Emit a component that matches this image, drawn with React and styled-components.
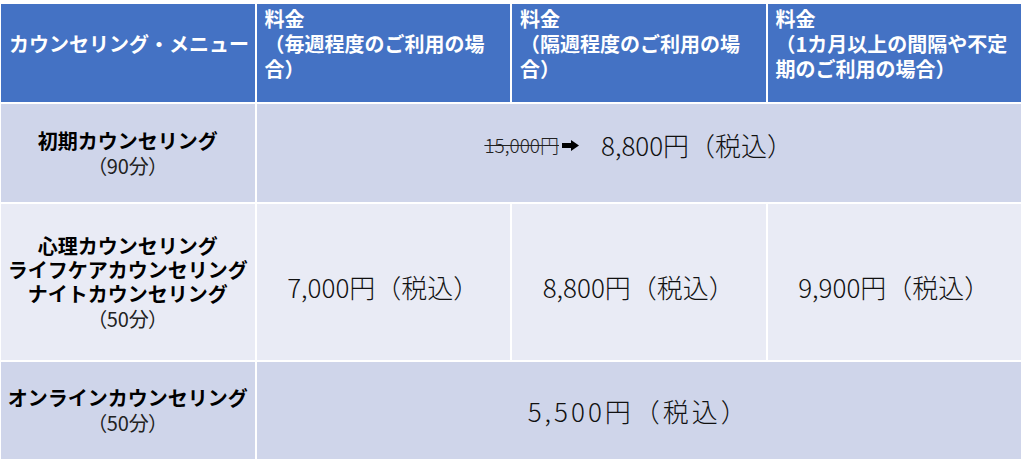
import React from "react";
import styled, { createGlobalStyle } from "styled-components";

const GlobalStyle = createGlobalStyle`
  body {
    margin: 0;
    background: #fff;
    font-family: "Noto Sans CJK JP", "Noto Sans", sans-serif;
  }
`;

const BAND = "#cfd5ea";
const LIGHT = "#e9ebf5";

export default function App() {
  return (
    <>
      <GlobalStyle />
      <Table>
        <HeadCell $top={27} $nowrap>カウンセリング・メニュー</HeadCell>
        <HeadCell>料金<br />（毎週程度のご利用の場合）</HeadCell>
        <HeadCell>料金<br />（隔週程度のご利用の場合）</HeadCell>
        <HeadCell>料金<br />（1カ月以上の間隔や不定期のご利用の場合）</HeadCell>

        <MenuCell $tone={BAND}>
          <MenuName>初期カウンセリング</MenuName>
          <Duration>（90分）</Duration>
        </MenuCell>
        <PriceCell $tone={BAND} $span={3} $shift={-9}>
          <OldPrice>15,000円</OldPrice>
          <Arrow viewBox="0 0 17 11">
            <polygon points="0,3 9,3 9,0 17,5.5 9,11 9,8 0,8" fill="#000" />
          </Arrow>
          <span>8,800円（税込）</span>
        </PriceCell>

        <MenuCell $tone={LIGHT}>
          <MenuName>心理カウンセリング</MenuName>
          <MenuName>ライフケアカウンセリング</MenuName>
          <MenuName>ナイトカウンセリング</MenuName>
          <Duration>（50分）</Duration>
        </MenuCell>
        <PriceCell $tone={LIGHT} $shift={4}>7,000円（税込）</PriceCell>
        <PriceCell $tone={LIGHT} $shift={4}>8,800円（税込）</PriceCell>
        <PriceCell $tone={LIGHT} $shift={4}>9,900円（税込）</PriceCell>

        <MenuCell $tone={BAND}>
          <MenuName>オンラインカウンセリング</MenuName>
          <Duration>（50分）</Duration>
        </MenuCell>
        <PriceCell $tone={BAND} $span={3} $spaced>5,500円（税込）</PriceCell>
      </Table>
    </>
  );
}

const Table = styled.div`
  width: 1020px;
  margin: 4px 0 0 1px;
  display: grid;
  grid-template-columns: repeat(4, minmax(0, 1fr));
  grid-template-rows: 98px 98px 156px 97px;
  gap: 2px;
  background: #fff;
`;

const HeadCell = styled.div`
  background: #4472c4;
  color: #fff;
  font-size: 20px;
  line-height: 25px;
  font-weight: 700;
  white-space: ${(p) => (p.$nowrap ? "nowrap" : "normal")};
  padding: ${(p) => p.$top || 2}px 8px 0 8px;
  box-sizing: border-box;
`;

const MenuCell = styled.div`
  background: ${(p) => p.$tone};
  display: flex;
  flex-direction: column;
  align-items: center;
  justify-content: center;
  text-align: center;
  color: #000;
`;

const MenuName = styled.div`
  font-size: 20px;
  line-height: 24px;
  font-weight: 700;
  white-space: nowrap;
`;

const Duration = styled.div`
  font-size: 20px;
  line-height: 25px;
  color: #222;
  font-feature-settings: "palt";
`;

const PriceCell = styled.div`
  grid-column: span ${(p) => p.$span || 1};
  background: ${(p) => p.$tone};
  display: flex;
  align-items: center;
  justify-content: center;
  font-size: 26px;
  font-weight: 300;
  color: #111;
  letter-spacing: ${(p) => (p.$spaced ? "3px" : "0")};
  padding-top: ${(p) => Math.max(0, p.$shift || 0) * 2}px;
  padding-bottom: ${(p) => Math.max(0, -(p.$shift || 0)) * 2}px;
  box-sizing: border-box;
`;

const OldPrice = styled.span`
  font-size: 19px;
  text-decoration: line-through;
  color: #222;
`;

const Arrow = styled.svg`
  width: 17px;
  height: 11px;
  margin: 2px 22px 0 3px;
`;
